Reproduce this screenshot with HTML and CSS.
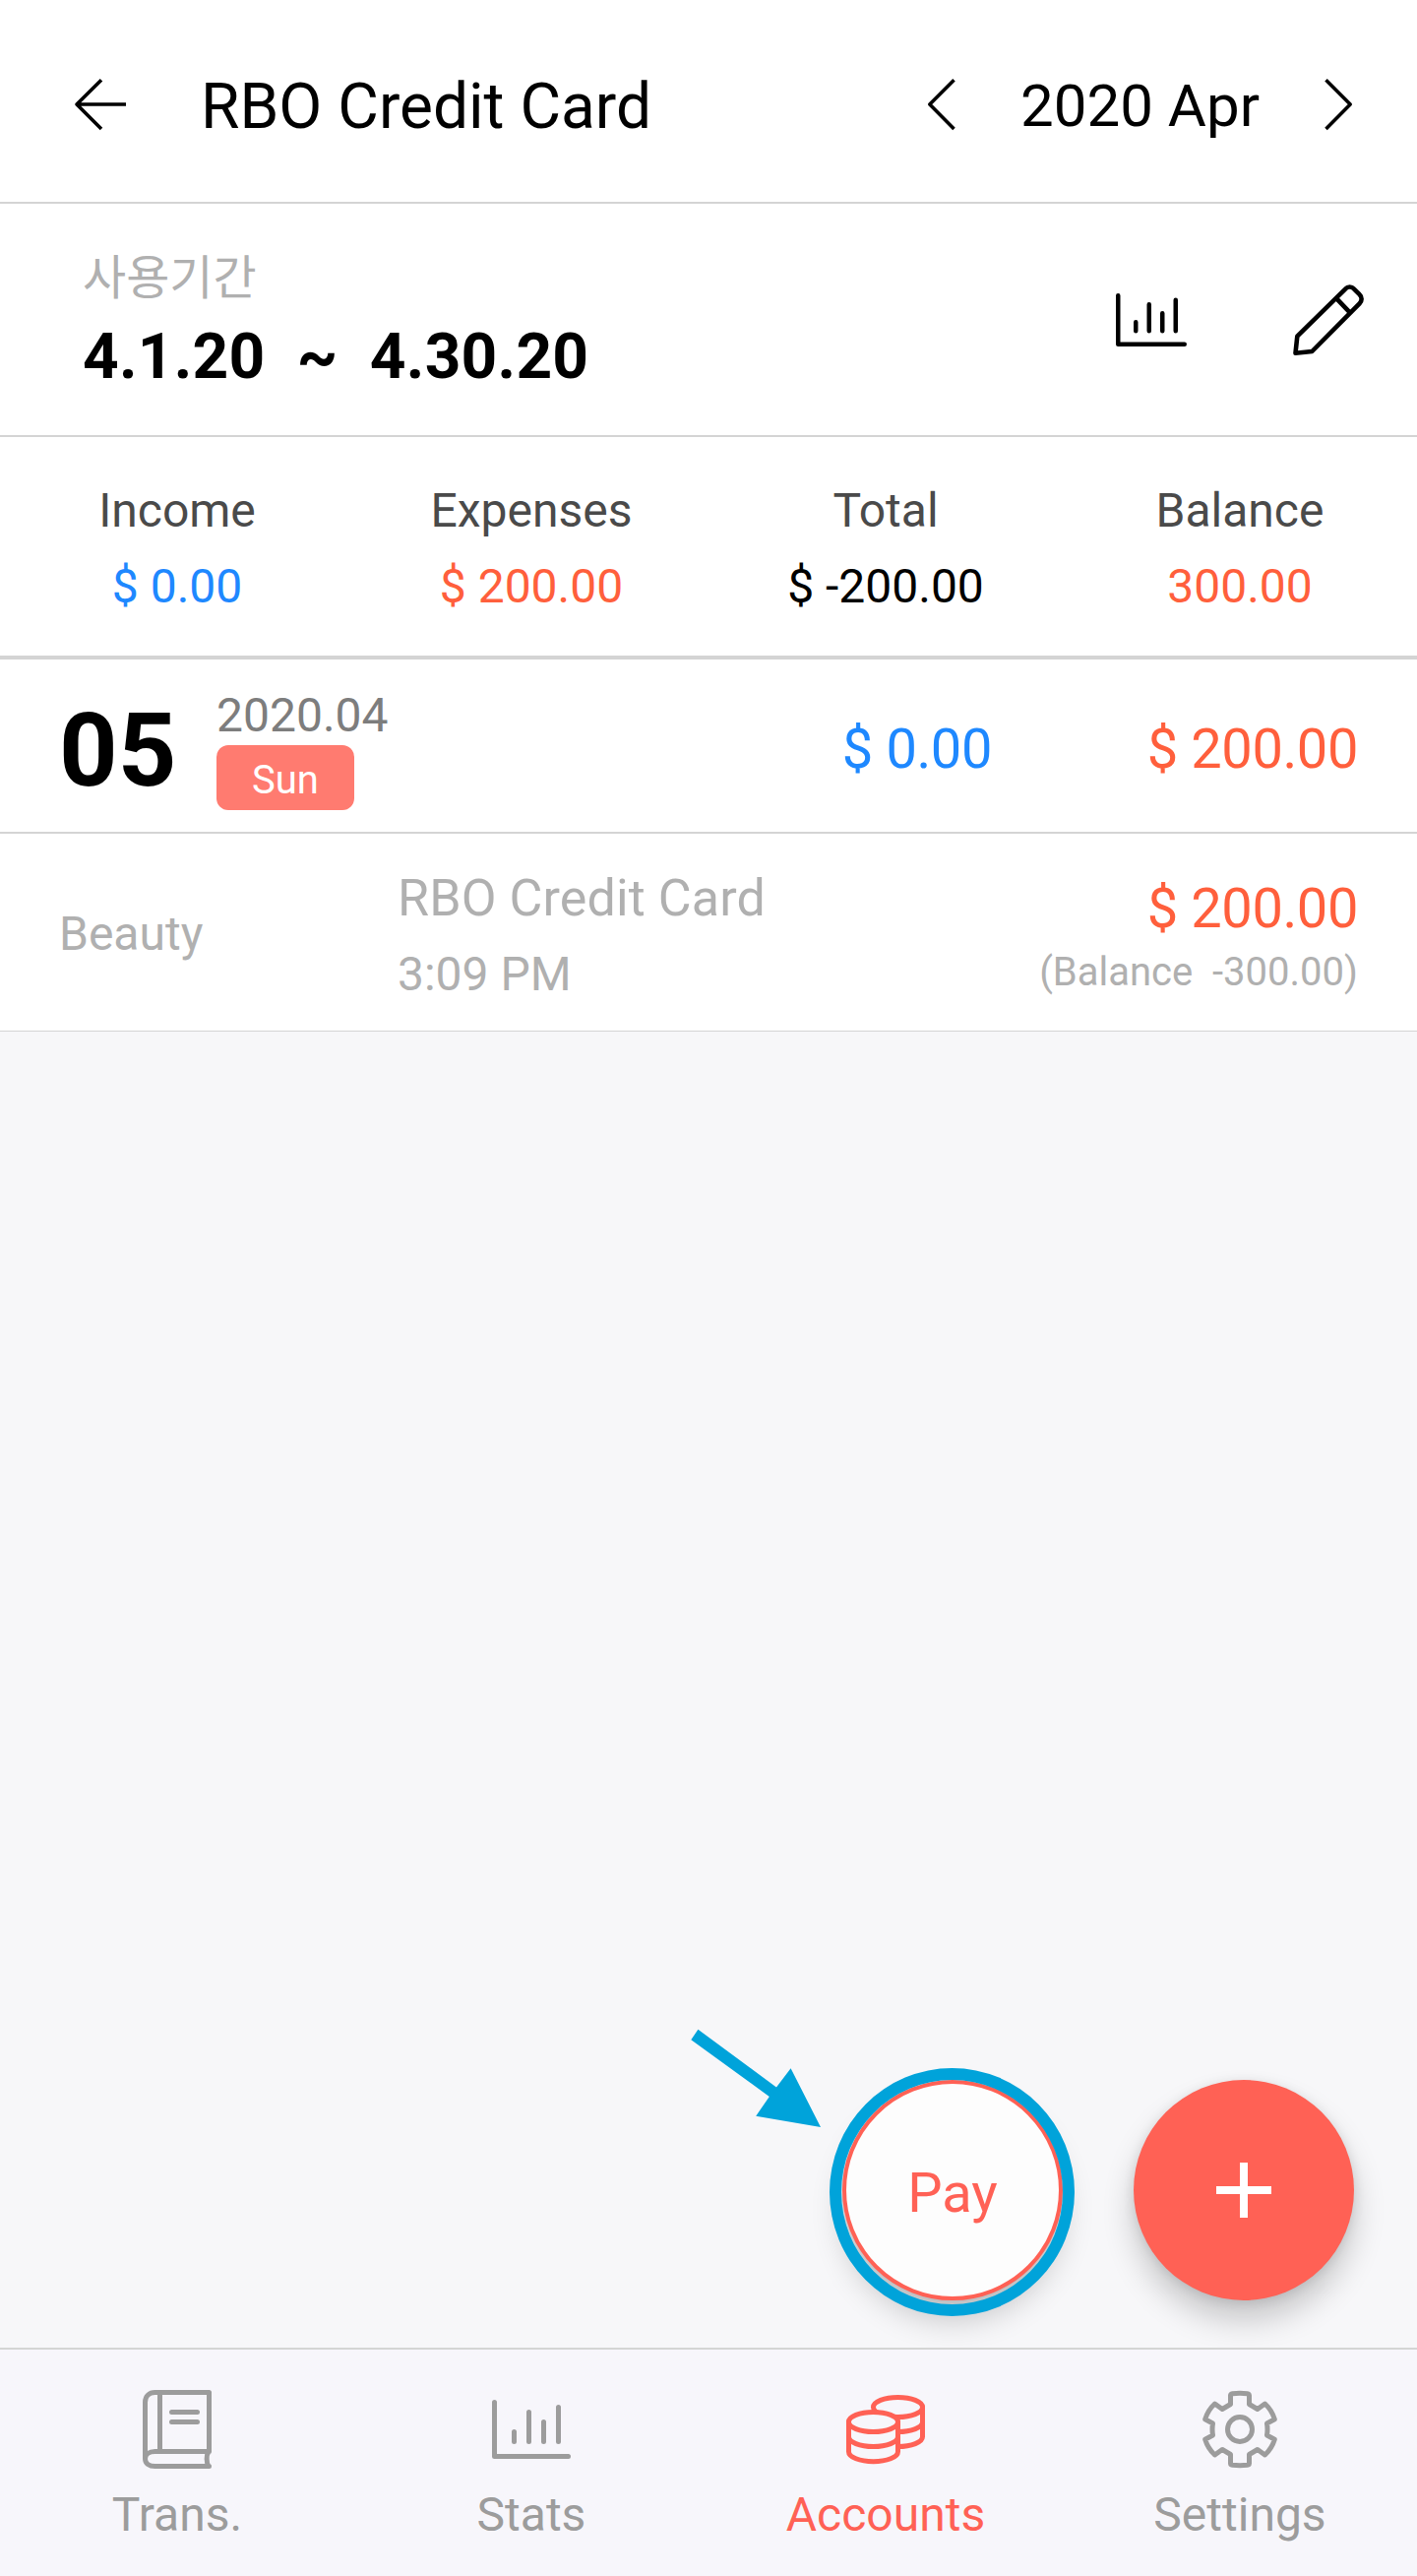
FILE: index.html
```html
<!DOCTYPE html>
<html lang="en">
<head>
<meta charset="utf-8">
<title>RBO Credit Card</title>
<link rel="stylesheet" href="styles.css">
</head>
<body>
<div class="app">
  <header class="header">
    <svg class="back" width="56" height="56" viewBox="0 0 56 56"><path d="M53 28H3M28 3.2 3 28 28 53"/></svg>
    <h1 class="title">RBO Credit Card</h1>
    <div class="month">
      <svg width="32" height="56" viewBox="0 0 32 56"><path d="M28.5 3.2 3.8 28 28.5 53"/></svg>
      <span class="month-name">2020 Apr</span>
      <svg width="32" height="56" viewBox="0 0 32 56"><path d="M3.5 3.2 28.2 28 3.5 53"/></svg>
    </div>
  </header>

  <section class="period">
    <div>
      <div class="period-label" lang="ko">사용기간</div>
      <div class="period-dates">4.1.20  ~  4.30.20</div>
    </div>
    <div class="period-tools">
      <svg width="72" height="54" viewBox="0 0 80 60"><path d="M2.5 2.5V57.5H77.5M22.5 32.5V42.5M37.5 12.5V42.5M52.5 22.5V42.5M67.5 7.5V42.5"/></svg>
      <svg class="pencil" width="72" height="72" viewBox="0 0 72 72"><path d="M2.5 69.7 4.3 52.7 53.2 4.6C55.7 1.7 59.5 1.7 62 4.6L67.6 10.2C70.3 12.7 70.3 16.5 67.6 19.3L19.3 68ZM44.3 14.3 57.7 28.3"/></svg>
    </div>
  </section>

  <section class="summary">
    <div><div class="name">Income</div><div class="blue">$ 0.00</div></div>
    <div><div class="name">Expenses</div><div class="red">$ 200.00</div></div>
    <div><div class="name">Total</div><div>$ -200.00</div></div>
    <div><div class="name">Balance</div><div class="red">300.00</div></div>
  </section>

  <section class="day">
    <div class="day-number">05</div>
    <div class="day-info">
      <div class="day-month">2020.04</div>
      <div class="weekday">Sun</div>
    </div>
    <div class="day-amount blue">$ 0.00</div>
    <div class="day-amount red">$ 200.00</div>
  </section>

  <section class="entry">
    <div class="category">Beauty</div>
    <div class="entry-info">
      <div class="entry-title">RBO Credit Card</div>
      <div class="entry-time">3:09 PM</div>
    </div>
    <div class="entry-sum">
      <div class="entry-amount red">$ 200.00</div>
      <div class="entry-balance">(Balance  -300.00)</div>
    </div>
  </section>

  <main class="space">
    <button class="fab pay">Pay</button>
    <button class="fab add" aria-label="Add"><svg width="56" height="56" viewBox="0 0 56 56"><path d="M0 28H56M28 0V56"/></svg></button>
    <div class="ring"></div>
    <svg class="pointer" width="134" height="102" viewBox="0 0 134 102"><path d="M2.3 12.2 9.4 1.8 89 60.5 103.6 41.3 134 101 68.2 89.7 81.8 70Z"/></svg>
  </main>

  <nav class="tabs">
    <div class="tab">
      <svg width="70" height="80" viewBox="0 0 70 80"><path d="M67.5 62.5V2.5H12.5C6.5 2.5 2.5 6.5 2.5 12.5V70M67.5 62.5H12.5C6.5 62.5 2.5 65.5 2.5 70S6.5 77.5 12.5 77.5H67.5M67 62.5C64.5 66 64.5 74 67 77.5M17.5 2.5V62.5M29.5 22.5H55.5M29.5 32.5H55.5"/></svg>
      <span>Trans.</span>
    </div>
    <div class="tab">
      <svg width="80" height="60" viewBox="0 0 80 60"><path d="M2.5 2.5V57.5H77.5M22.5 32.5V42.5M37.5 12.5V42.5M52.5 22.5V42.5M67.5 7.5V42.5"/></svg>
      <span>Stats</span>
    </div>
    <div class="tab active">
      <svg width="80" height="72" viewBox="0 0 80 72"><ellipse cx="52.5" cy="13.5" rx="25" ry="10"/><path d="M77.5 13.5V43.5A25 10 0 0 1 52.5 53.5M77.5 28.5A25 10 0 0 1 52.5 38.5"/><path class="coin" d="M2.5 28.5A25 10 0 0 1 52.5 28.5V58.7A25 10 0 0 1 2.5 58.7Z"/><path d="M2.5 28.5A25 10 0 0 0 52.5 28.5M2.5 43.5A25 10 0 0 0 52.5 43.5"/></svg>
      <span>Accounts</span>
    </div>
    <div class="tab">
      <svg width="80" height="80" viewBox="-40 -40 80 80"><path d="M-9.5 -34.5Q-9.5 -36 -7.5 -36.3Q0 -37.2 7.5 -36.3Q9.5 -36 9.5 -34.5V-25.5L17.9 -20.5 25.5 -26Q32.5 -19.5 35.3 -10.3L27.5 -6Q28.5 0 27.5 6L35.3 10.3Q32.5 19.5 25.5 26L17.9 20.5 9.5 25.5V34.5Q9.5 36 7.5 36.3Q0 37.2 -7.5 36.3Q-9.5 36 -9.5 34.5V25.5L-17.9 20.5 -25.5 26Q-32.5 19.5 -35.3 10.3L-27.5 6Q-28.5 0 -27.5 -6L-35.3 -10.3Q-32.5 -19.5 -25.5 -26L-17.9 -20.5 -9.5 -25.5Z"/><circle r="12.5"/></svg>
      <span>Settings</span>
    </div>
  </nav>
</div>
</body>
</html>
```
FILE: styles.css
```css
* { box-sizing: border-box; }

body {
  margin: 0;
  background: #fff;
  color: #000;
  font-family: Roboto, "Noto Sans CJK KR", sans-serif;
  font-size: 48px;
}

svg {
  display: block;
  fill: none;
  stroke: currentColor;
  stroke-width: 5;
  stroke-linecap: round;
  stroke-linejoin: round;
}

.app {
  display: flex;
  flex-direction: column;
  width: 1440px;
  height: 2617px;
}

.blue { color: #1e88ff; }
.red { color: #ff5f3c; }

.header {
  display: flex;
  align-items: center;
  height: 207px;
  padding: 11px 64px 0 75px;
  border-bottom: 2px solid #d4d4d4;
}
.header svg { margin-bottom: 5px; stroke-width: 3.6; stroke-linecap: butt; }
.title { margin: 1px 0 0 73px; font-size: 64px; font-weight: 400; line-height: 76px; }
.month { display: flex; align-items: center; gap: 64px; margin-left: auto; }
.month-name { font-size: 60px; line-height: 72px; margin-bottom: 1px; }

.period {
  display: flex;
  justify-content: space-between;
  height: 237px;
  padding: 41px 54px 0 84px;
  border-bottom: 2px solid #d4d4d4;
}
.period-label { color: #b0b0b0; font-family: "Noto Sans CJK KR", sans-serif; line-height: 60px; }
.period-dates {
  margin-top: 17px;
  font-size: 64px;
  font-weight: 700;
  line-height: 76px;
  letter-spacing: .25px;
  white-space: pre;
}
.period-tools { display: flex; align-items: center; gap: 108px; height: 154px; }
.period-tools .pencil { stroke-width: 4.6; }

.summary {
  display: grid;
  grid-template-columns: repeat(4, 1fr);
  height: 226px;
  padding-top: 36px;
  border-bottom: 4px solid #d4d4d4;
  line-height: 77px;
  text-align: center;
}
.summary .name { color: #4a4a4a; }

.day {
  display: grid;
  grid-template-columns: 160px 428px 360px 372px;
  height: 177px;
  padding: 0 60px;
  border-bottom: 2px solid #d4d4d4;
}
.day-number { padding-top: 33px; font-size: 104px; font-weight: 700; line-height: 120px; }
.day-info { padding-top: 29px; }
.day-month { color: #7d7d7d; line-height: 56px; }
.weekday {
  width: 140px;
  height: 66px;
  margin-top: 2px;
  padding-top: 5px;
  border-radius: 12px;
  background: #ff7b70;
  color: #fff;
  font-size: 40px;
  line-height: 62px;
  text-align: center;
}
.day-amount { padding-top: 59px; font-size: 56px; line-height: 64px; letter-spacing: -.4px; text-align: right; }

.entry {
  display: grid;
  grid-template-columns: 344px 1fr auto;
  height: 201px;
  padding: 0 60px;
  border-bottom: 1px solid #d4d4d4;
  color: #b0b0b0;
}
.category { padding-top: 72px; line-height: 60px; }
.entry-info { padding-top: 27px; line-height: 77px; }
.entry-title { font-size: 52px; letter-spacing: .12px; }
.entry-sum { padding-top: 44px; text-align: right; }
.entry-amount { font-size: 56px; line-height: 64px; letter-spacing: -.4px; }
.entry-balance { font-size: 40px; line-height: 66px; white-space: pre; }

.space {
  position: relative;
  flex: 1;
  overflow: hidden;
  background: #f7f7f9;
}
.fab {
  position: absolute;
  bottom: 48px;
  display: flex;
  align-items: center;
  justify-content: center;
  width: 224px;
  height: 224px;
  padding: 0;
  border: 0;
  border-radius: 50%;
  box-shadow: 0 20px 32px rgba(0, 0, 0, .2), 0 2px 12px rgba(0, 0, 0, .1);
  font: 400 56px/64px Roboto, sans-serif;
}
.pay {
  right: 360px;
  padding-top: 6px;
  border: 4px solid #ff6155;
  background: #fdfdfd;
  color: #ff6155;
}
.add { right: 64px; background: #ff6155; color: #fff; }
.add svg { stroke-width: 8; stroke-linecap: butt; }
.ring {
  position: absolute;
  right: 348px;
  bottom: 32px;
  width: 249px;
  height: 252px;
  border: 12px solid #00a3da;
  border-radius: 50%;
}
.pointer { position: absolute; right: 606px; bottom: 223px; fill: #00a3da; stroke: none; }

.tabs {
  display: grid;
  grid-template-columns: repeat(4, 1fr);
  height: 232px;
  border-top: 2px solid #d4d5d4;
  background: #f7f6fb;
  color: #9c9c9c;
}
.tab {
  display: grid;
  grid-template-rows: 80px 60px;
  row-gap: 17px;
  place-items: center;
  align-content: start;
  padding-top: 41px;
  line-height: 60px;
}
.active { color: #ff6155; }
.coin { fill: #f7f6fb; }
```
